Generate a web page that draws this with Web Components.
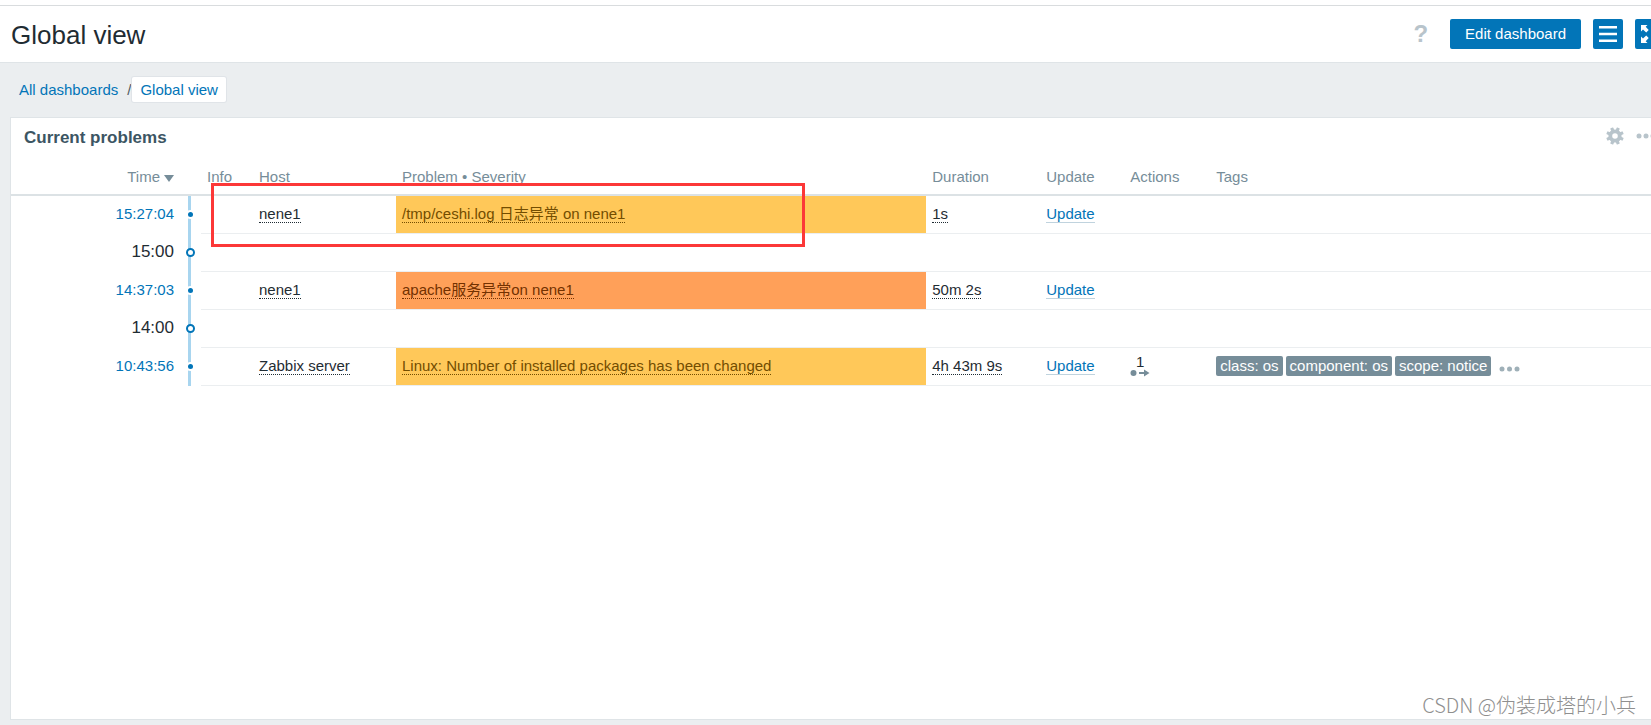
<!DOCTYPE html>
<html lang="en">
<head>
<meta charset="utf-8">
<title>Global view</title>
<style>
  html, body { margin: 0; height: 100%; }
  body {
    overflow: hidden;
    background: #ebeef0;
    color: #1f2c33;
    font: 15px/20px "Liberation Sans", "Noto Sans CJK SC", sans-serif;
  }
</style>
</head>
<body>
<zbx-page>
  <zbx-header slot="header" heading="Global view"></zbx-header>
  <zbx-breadcrumbs slot="nav"></zbx-breadcrumbs>
  <zbx-widget heading="Current problems">
    <zbx-problems></zbx-problems>
  </zbx-widget>
</zbx-page>
<zbx-watermark>CSDN @伪装成塔的小兵</zbx-watermark>

<script>
class Base extends HTMLElement {
  constructor() {
    super();
    this.attachShadow({ mode: "open" });
  }
  connectedCallback() {
    this.shadowRoot.innerHTML = this.render();
  }
}

const resetButton = `
  button { font: inherit; border: 0; padding: 0; margin: 0; background: none; color: inherit; cursor: pointer; }
  svg { display: block; }
`;

/* Page frame: wider than the window, the surplus runs off the right edge. */
customElements.define("zbx-page", class extends Base {
  render() {
    return `<style>
      :host { display: flex; flex-direction: column; width: calc(100% + 28px); min-height: 100vh; box-sizing: border-box; padding-bottom: 5px; }
      main { flex: 1; display: flex; padding: 0 10px; }
      ::slotted(zbx-widget) { flex: 1; min-width: 0; }
    </style>
    <slot name="header"></slot>
    <slot name="nav"></slot>
    <main><slot></slot></main>`;
  }
});

customElements.define("zbx-header", class extends Base {
  render() {
    return `<style>
      ${resetButton}
      :host { display: block; background: #fff; padding-top: 5px; border-bottom: 1px solid #dfe4e7; }
      header { border-top: 1px solid #d9dcde; height: 56px; display: flex; align-items: center; padding: 0 14px 0 11px; }
      h1 { margin: 0; padding-top: 2px; font-size: 26px; line-height: 30px; font-weight: 400; flex: 1; }
      nav { display: flex; align-items: center; gap: 12px; }
      .help { font-size: 24px; line-height: 30px; font-weight: 700; color: #b8c4cb; margin-right: 10px; }
      .primary { background: #0275b8; color: #fff; height: 30px; border-radius: 2px; }
      .edit { padding: 0 15px; }
      .icon { width: 30px; display: grid; place-items: center; }
    </style>
    <header>
      <h1>${this.getAttribute("heading")}</h1>
      <nav>
        <button class="help" aria-label="Help">?</button>
        <button class="primary edit">Edit dashboard</button>
        <button class="primary icon" aria-label="Actions">
          <svg width="18" height="16" viewBox="0 0 18 16" stroke="#fff" stroke-width="2.400"><path d="M0 1.300h18M0 8h18M0 14.700h18"/></svg>
        </button>
        <button class="primary icon" aria-label="Kiosk mode">
          <svg width="18" height="18" viewBox="0 0 18 18" fill="#fff"><path d="M0 0h6.500L4.700 1.800l3 3.200L5.200 7.500 2 4.500 0 6.500zM18 0h-6.500l1.800 1.800-3 3.200 2.500 2.500 3.200-3 2 2zM0 18h6.500l-1.800-1.800 3-3.200-2.500-2.500-3.200 3-2-2zM18 18h-6.500l1.800-1.800-3-3.200 2.500-2.500 3.200 3 2-2z"/></svg>
        </button>
      </nav>
    </header>`;
  }
});

customElements.define("zbx-breadcrumbs", class extends Base {
  render() {
    return `<style>
      :host { display: block; padding: 14px 19px 15px; }
      nav { display: flex; align-items: center; }
      a { color: #0275b8; text-decoration: none; }
      span { margin-left: 9px; color: #4f5b62; }
      .current { background: #fff; padding: 3px 8px 2px; border-radius: 2px; box-shadow: 0 0 0 1px #e0e4e8; margin-left: 1px; }
    </style>
    <nav>
      <a href="#all">All dashboards</a><span>/</span>
      <a class="current" href="#global">Global view</a>
    </nav>`;
  }
});

customElements.define("zbx-widget", class extends Base {
  render() {
    return `<style>
      ${resetButton}
      :host { display: block; background: #fff; border: 1px solid #dfe4e7; }
      header { box-sizing: border-box; display: flex; align-items: flex-start; height: 40px; padding: 9px 12px 0 13px; gap: 12px; }
      h2 { margin: 0; flex: 1; font-size: 17px; line-height: 22px; font-weight: 700; color: #3c5563; }
    </style>
    <header>
      <h2>${this.getAttribute("heading")}</h2>
      <button aria-label="Edit widget">
        <svg width="18" height="18" viewBox="-9 -9 18 18">
          <circle r="4.700" fill="none" stroke="#b8c4cb" stroke-width="3.800"/>
          <g fill="#b8c4cb">${[0, 45, 90, 135, 180, 225, 270, 315].map(d => `<rect x="-1.600" y="-8.800" width="3.200" height="3.500" rx=".6" transform="rotate(${d + 22.5})"/>`).join("")}</g>
        </svg>
      </button>
      <button aria-label="Widget menu">
        <svg width="20" height="18" fill="#b8c4cb"><circle cx="3" cy="9" r="2.500"/><circle cx="10" cy="9" r="2.500"/><circle cx="17" cy="9" r="2.500"/></svg>
      </button>
    </header>
    <slot></slot>`;
  }
});

customElements.define("zbx-dot", class extends Base {
  render() {
    return `<style>
      :host { display: block; box-sizing: border-box; width: 5px; height: 5px; margin: 0 auto; border-radius: 50%; background: #0275b8; box-shadow: 0 0 0 2px #fff; }
      :host([hour]) { width: 9px; height: 9px; border: 2px solid #0275b8; background: #fff; box-shadow: none; }
    </style>`;
  }
});

customElements.define("zbx-tag", class extends Base {
  render() {
    return `<style>
      :host { display: block; background: #768d99; color: #fff; padding: 0 4px; border-radius: 2px; }
    </style><slot></slot>`;
  }
});

/* Frame drawn round the row that is being pointed out. */
customElements.define("zbx-highlight", class extends Base {
  render() {
    return `<style>
      :host { position: absolute; box-sizing: border-box; left: 200px; top: 25px; width: 594px; height: 64px; border: 3px solid #fc3838; pointer-events: none; }
    </style>`;
  }
});

customElements.define("zbx-watermark", class extends Base {
  render() {
    return `<style>
      :host { position: absolute; right: 15px; bottom: 8px; font: 20px/24px "Noto Sans CJK SC", sans-serif; font-weight: 300; color: #8f8f8f; }
    </style><slot></slot>`;
  }
});

customElements.define("zbx-problems", class extends Base {
  render() {
    const rows = [
      { time: "15:27:04", host: "nene1", sev: "warning", name: "/tmp/ceshi.log 日志异常 on nene1", duration: "1s" },
      { hour: "15:00" },
      { time: "14:37:03", host: "nene1", sev: "average", name: "apache服务异常on nene1", duration: "50m 2s" },
      { hour: "14:00" },
      { time: "10:43:56", host: "Zabbix server", sev: "warning", name: "Linux: Number of installed packages has been changed", duration: "4h 43m 9s",
        actions: 1, tags: ["class: os", "component: os", "scope: notice"] }
    ];
    const row = r => r.hour
      ? `<tr><td class="time hour">${r.hour}</td><td class="line"><zbx-dot hour></zbx-dot></td><td colspan="7"></td></tr>`
      : `<tr>
          <td class="time"><a href="#event">${r.time}</a></td>
          <td class="line"><zbx-dot></zbx-dot></td>
          <td></td>
          <td><a class="dotted" href="#host">${r.host}</a></td>
          <td class="${r.sev}"><a class="dotted" href="#problem">${r.name}</a></td>
          <td><a class="dotted" href="#duration">${r.duration}</a></td>
          <td><a class="update" href="#update">Update</a></td>
          <td>${r.actions ? `<button class="act" aria-label="Actions">
            <span>${r.actions}</span>
            <svg width="20" height="8" fill="#768d99"><circle cx="3.500" cy="4" r="3"/><path d="M9 3h5V.500L19.500 4 14 7.500V5H9z"/></svg></button>` : ""}</td>
          <td>${r.tags ? `<div class="tags">${r.tags.map(t => `<zbx-tag>${t}</zbx-tag>`).join("")}
            <button class="more" aria-label="More tags"><svg width="22" height="20" fill="#9fb0b8"><circle cx="3" cy="13" r="2.500"/><circle cx="10.500" cy="13" r="2.500"/><circle cx="18" cy="13" r="2.500"/></svg></button></div>` : ""}</td>
        </tr>`;
    return `<style>
      ${resetButton}
      :host { display: block; position: relative; }
      table { width: 100%; table-layout: fixed; border-collapse: separate; border-spacing: 0; }
      th, td { box-sizing: border-box; padding: 0 6px; text-align: left; font-weight: 400; white-space: nowrap; }
      th { height: 38px; padding-top: 2px; color: #768d99; border-bottom: 2px solid #dce2e5; }
      td { height: 38px; padding-bottom: 2px; border-bottom: 1px solid #ebeef0; }
      .time { text-align: right; border-bottom: 0; }
      th.time { border-bottom: 2px solid #dce2e5; }
      th svg { display: inline-block; margin-left: 4px; }
      .hour { font-size: 17px; }
      .line { padding: 0 0 2px; border-bottom: 0; background: linear-gradient(#a8d5ef, #a8d5ef) 8px 0 / 3px 100% no-repeat; }
      a { color: #0275b8; text-decoration: none; }
      .dotted { color: #1f2c33; border-bottom: 1px dotted #1f2c33; }
      .warning { background: #ffc859; }
      .warning a { color: #734d00; border-color: #734d00; }
      .average { background: #ffa059; }
      .average a { color: #733100; border-color: #733100; }
      .update { border-bottom: 1px solid #c0d3de; }
      .tags { display: flex; gap: 3px; }
      .more { margin-left: 5px; }
      .act { display: grid; justify-items: center; vertical-align: middle; }
      .act span { line-height: 14px; }
    </style>
    <table>
      <colgroup>
        <col style="width:169px"><col style="width:21px"><col style="width:52px"><col style="width:143px">
        <col style="width:32%"><col style="width:114px"><col style="width:84px"><col style="width:86px"><col>
      </colgroup>
      <thead><tr>
        <th class="time">Time<svg width="10" height="7" fill="#768d99"><path d="M0 0h10L5 7z"/></svg></th>
        <th></th><th>Info</th><th>Host</th><th>Problem • Severity</th><th>Duration</th><th>Update</th><th>Actions</th><th>Tags</th>
      </tr></thead>
      <tbody>${rows.map(row).join("")}</tbody>
    </table>
    <zbx-highlight></zbx-highlight>`;
  }
});
</script>
</body>
</html>
